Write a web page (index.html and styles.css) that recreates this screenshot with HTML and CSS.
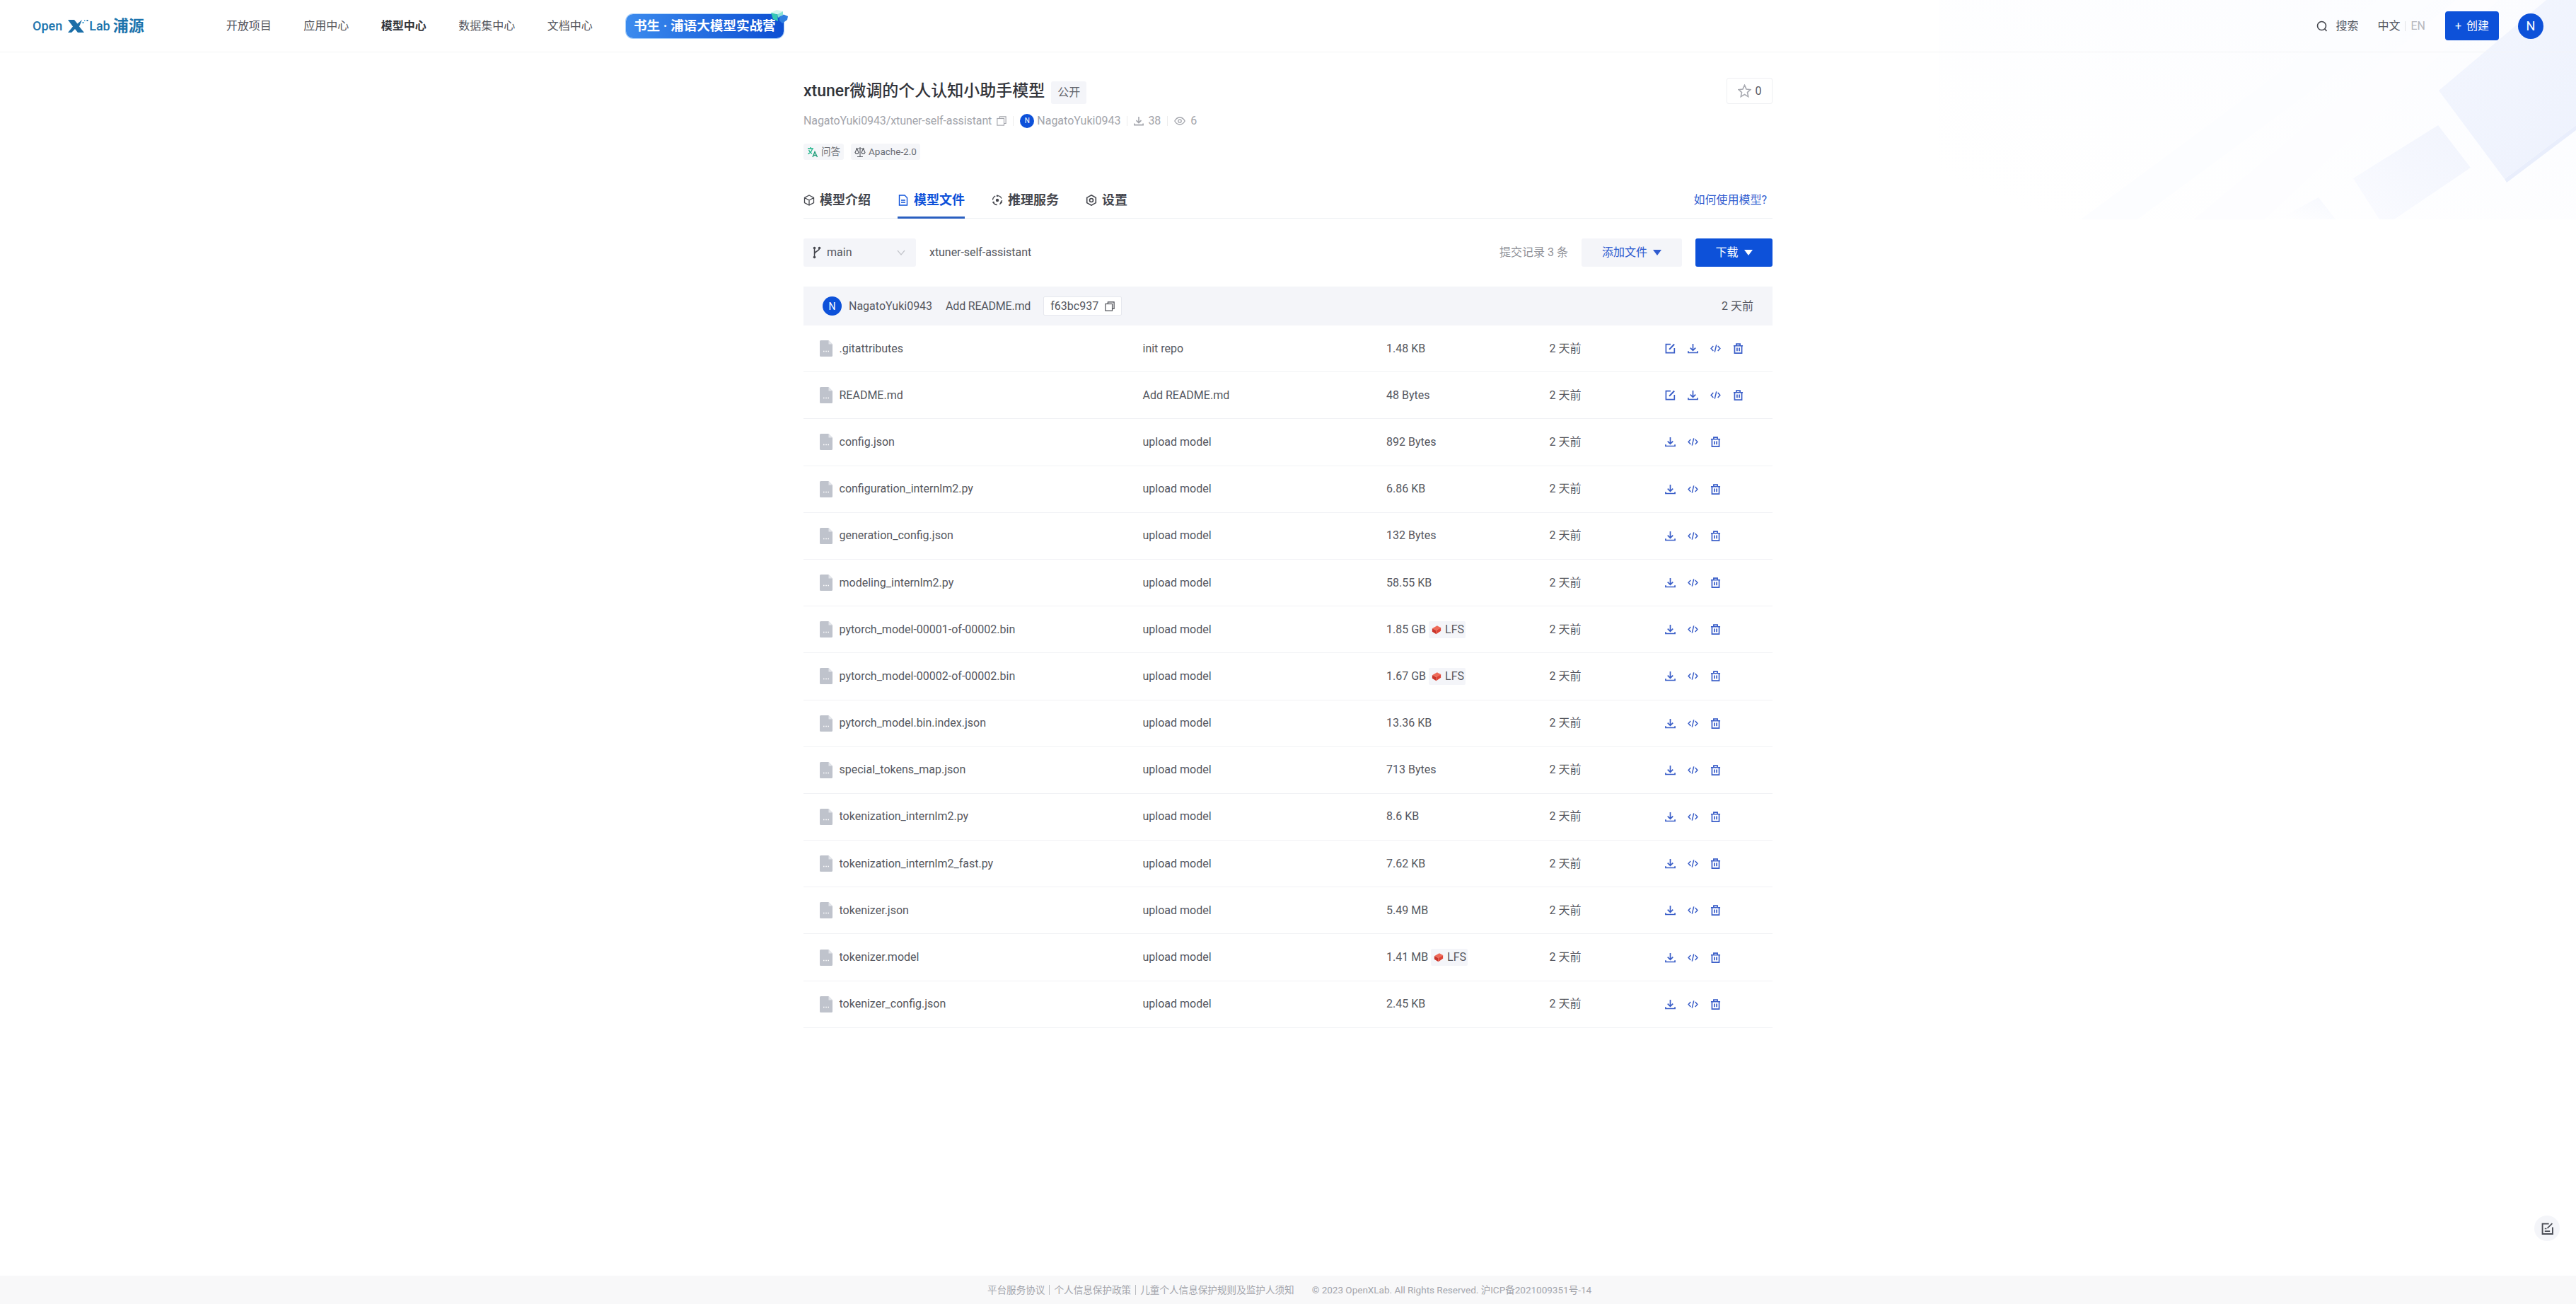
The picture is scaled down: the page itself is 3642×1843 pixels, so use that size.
FILE: index.html
```html
<!DOCTYPE html>
<html lang="zh">
<head>
<meta charset="utf-8">
<title>xtuner微调的个人认知小助手模型</title>
<link rel="stylesheet" href="styles.css">
</head>
<body>
<svg class="sprite" width="0" height="0" aria-hidden="true">
  <symbol id="i-edit" viewBox="0 0 16 16"><path d="M8.5 1.8H1.5v12.7h12.7V7.500" fill="none" stroke="currentColor" stroke-width="1.800"/><path d="M6.500 9.500 14 1.600" fill="none" stroke="currentColor" stroke-width="2.200"/></symbol>
  <symbol id="i-down" viewBox="0 0 16 16"><path d="M8 1v9.500M4 7l4 4 4-4" fill="none" stroke="currentColor" stroke-width="1.800"/><path d="M1 12v2.400h14V12" fill="none" stroke="currentColor" stroke-width="1.800"/></symbol>
  <symbol id="i-code" viewBox="0 0 16 16"><path d="M4.600 4.200 1.200 8l3.400 3.800M11.400 4.200 14.800 8l-3.400 3.800M9.300 2.500 6.700 13.500" fill="none" stroke="currentColor" stroke-width="1.600"/></symbol>
  <symbol id="i-trash" viewBox="0 0 16 16"><path d="M1 4h14M5.200 3.600V1.200h5.600v2.400M2.600 4v11h10.800V4M6.300 7v5M9.700 7v5" fill="none" stroke="currentColor" stroke-width="1.800"/></symbol>
  <symbol id="i-copy" viewBox="0 0 16 16"><path d="M5 4V1h10v11h-3" fill="none" stroke="currentColor" stroke-width="1.300"/><rect x="1" y="4" width="11" height="11" fill="none" stroke="currentColor" stroke-width="1.300"/></symbol>
  <symbol id="i-file" viewBox="0 0 18 23"><path d="M1.500 0H12.500L18 5.500V21.500A1.500 1.500 0 0 1 16.500 23H1.500A1.500 1.500 0 0 1 0 21.500V1.500A1.500 1.500 0 0 1 1.500 0Z" fill="#bfc3cc"/><path d="M12.500 0 18 5.500H12.500Z" fill="#e3e5ea"/><path d="M5 15.500h1.500M8.300 15.500h1.500M11.500 15.500h1.500" stroke="#fff" stroke-width="1.500"/></symbol>
  <symbol id="i-lfs" viewBox="0 0 16 16"><path d="M1 6 9 1.500 15 4.500 7.500 9Z" fill="#ee6a58"/><path d="M1 6 7.500 9V15L1 11Z" fill="#c9342a"/><path d="M7.500 9 15 4.500V10L7.500 15Z" fill="#df4436"/></symbol>
</svg>

<svg class="deco" viewBox="0 0 900 310" aria-hidden="true">
  <defs>
    <linearGradient id="d1" x1="0" y1="0" x2="1" y2="1"><stop offset="0" stop-color="#f3f6fe"/><stop offset="1" stop-color="#eef2fd"/></linearGradient>
    <linearGradient id="d2" x1="1" y1="0" x2="0" y2="1"><stop offset="0" stop-color="#f1f4fd"/><stop offset="1" stop-color="#fafbff"/></linearGradient>
    <linearGradient id="d3" x1="1" y1="0" x2="0" y2="1"><stop offset="0" stop-color="#f6f8fe"/><stop offset="1" stop-color="#ffffff"/></linearGradient>
    <linearGradient id="d0" x1="1" y1="0" x2="0" y2="0.800"><stop offset="0" stop-color="#fbfcff"/><stop offset="1" stop-color="#ffffff"/></linearGradient>
  </defs>
  <rect width="900" height="310" fill="url(#d0)"/>
  <path d="M200 310 620 0H700L280 310Z" fill="#fcfdff"/>
  <path d="M360 310 730 0H790L460 310Z" fill="#fdfdff"/>
  <path d="M799 253 900 177V184L802 258Z" fill="#e9eefc"/>
  <path d="M706 128 858 0H900V177L799 253Z" fill="url(#d1)"/>
  <path d="M705 177 751 237 643 310H622L585 252Z" fill="url(#d2)"/>
  <path d="M536 279 560 310H479Z" fill="url(#d3)"/>
</svg>

<header class="topbar">
  <a class="logo">
    <span class="logo-en">Open</span>
    <svg class="logo-x" viewBox="0 0 29 18" aria-hidden="true"><path d="M0 0H9L13.500 5.500 20 0 16 9.500 23 18H14L10 13 5 18H0L7 9.500Z" fill="#1c6fa8"/><rect x="20.500" y="3" width="2" height="2" fill="#3a9ad0"/><rect x="26.500" y="0" width="2" height="2" fill="#1c6fa8"/><rect x="23" y=".5" width="1.500" height="1.500" fill="#3a9ad0"/></svg>
    <span class="logo-en">Lab</span>
    <span class="logo-cn">浦源</span>
  </a>
  <nav class="nav">
    <a>开放项目</a><a>应用中心</a><a class="on">模型中心</a><a>数据集中心</a><a>文档中心</a>
  </nav>
  <a class="banner">
    <span>书生 · 浦语大模型实战营</span>
    <svg class="banner-cube" viewBox="0 0 25 20" aria-hidden="true"><path d="M1 5 9 1 18 3 10 7.500Z" fill="#d5f6ef"/><path d="M1 5 10 7.500 11 17 4 14Z" fill="#34c8b4"/><path d="M10 7.500 18 3V8L11 12Z" fill="#86e3d4"/><path d="M13 11 19 7.500 25 10 24 15 17 20 13 16Z" fill="#2f7fe0"/></svg>
  </a>
  <div class="top-right">
    <a class="search"><svg class="search-i" viewBox="0 0 16 16" aria-hidden="true"><circle cx="7.500" cy="7.500" r="6" fill="none" stroke="currentColor" stroke-width="1.600"/><path d="m11.500 11.500 3 3.500" stroke="currentColor" stroke-width="1.600"/></svg><span>搜索</span></a>
    <div class="lang"><span>中文</span><i></i><span class="off">EN</span></div>
    <a class="create"><span class="plus">+</span>创建</a>
    <span class="avatar">N</span>
  </div>
</header>

<main class="page">
  <div class="title-row">
    <h1>xtuner微调的个人认知小助手模型</h1>
    <span class="pub">公开</span>
    <a class="star"><svg class="star-i" viewBox="0 0 20 20" aria-hidden="true"><path d="M10 1.500 12.600 7.300 18.800 8 14.200 12.200 15.500 18.500 10 15.300 4.500 18.500 5.800 12.200 1.200 8 7.400 7.300Z" fill="none" stroke="#a9abb2" stroke-width="1.700"/></svg><span>0</span></a>
  </div>
  <div class="meta">
    <span class="meta-path">NagatoYuki0943/xtuner-self-assistant</span>
    <svg class="ic14 m-copy"><use href="#i-copy"/></svg>
    <i class="sep"></i>
    <span class="av-xs">N</span>
    <span>NagatoYuki0943</span>
    <i class="sep"></i>
    <svg class="ic14"><use href="#i-down"/></svg>
    <span>38</span>
    <i class="sep"></i>
    <svg class="eye" viewBox="0 0 16 12" aria-hidden="true"><path d="M.8 6C3 2 5.500 1 8 1s5 1 7.200 5C13 10 10.500 11 8 11S3 10 .8 6Z" fill="none" stroke="currentColor" stroke-width="1.300"/><circle cx="8" cy="6" r="2.200" fill="none" stroke="currentColor" stroke-width="1.300"/></svg>
    <span>6</span>
  </div>
  <div class="tags">
    <span class="tag"><svg class="tag-i" viewBox="0 0 16 16" aria-hidden="true"><path d="M1 3h8M5 1v2M7.500 3C7 6.500 4.500 9 1.500 10.500M2.500 5c1 2.500 2.500 4 4.500 5" fill="none" stroke="#20b58a" stroke-width="1.400"/><path d="M8 15 11 7.500 14.500 15M9.200 12.500h4" fill="none" stroke="#1f9c78" stroke-width="1.400"/></svg>问答</span>
    <span class="tag"><svg class="tag-i" viewBox="0 0 16 16" aria-hidden="true"><path d="M8 1v13M4 14.500h8M2 3h12M3.500 3 1 8.500a2.600 2.600 0 0 0 5 0L3.500 3ZM12.500 3 10 8.500a2.600 2.600 0 0 0 5 0L12.500 3Z" fill="none" stroke="#5f6269" stroke-width="1.200"/></svg>Apache-2.0</span>
  </div>

  <div class="tabs">
    <a class="tab"><svg class="tab-i" viewBox="0 0 16 16" aria-hidden="true"><path d="M8 1 14.500 4.500V11.500L8 15 1.500 11.500V4.500ZM1.500 4.500 8 8l6.500-3.500M8 8v7" fill="none" stroke="currentColor" stroke-width="1.300"/></svg>模型介绍</a>
    <a class="tab on"><svg class="tab-i" viewBox="0 0 16 16" aria-hidden="true"><path d="M2.500 1H10l3.500 3.500V15h-11ZM5 8h6M5 11h6" fill="none" stroke="currentColor" stroke-width="1.400"/></svg>模型文件</a>
    <a class="tab"><svg class="tab-i" viewBox="0 0 16 16" aria-hidden="true"><circle cx="8" cy="8" r="6.500" fill="none" stroke="currentColor" stroke-width="1.300" stroke-dasharray="6.500 3.700"/><circle cx="8" cy="8" r="2.200" fill="currentColor"/><circle cx="8" cy="1.800" r="1.300" fill="currentColor"/><circle cx="2.600" cy="11" r="1.300" fill="currentColor"/><circle cx="13.400" cy="11" r="1.300" fill="currentColor"/></svg>推理服务</a>
    <a class="tab"><svg class="tab-i" viewBox="0 0 16 16" aria-hidden="true"><path d="M8 .8 14.300 4.400V11.600L8 15.200 1.700 11.600V4.400Z" fill="none" stroke="currentColor" stroke-width="1.600"/><circle cx="8" cy="8" r="2.500" fill="none" stroke="currentColor" stroke-width="1.600"/></svg>设置</a>
    <a class="how">如何使用模型?</a>
  </div>

  <div class="toolbar">
    <div class="branch">
      <svg class="branch-i" viewBox="0 0 12 18" aria-hidden="true"><circle cx="2.500" cy="2.500" r="1.800" fill="currentColor"/><circle cx="9.500" cy="2.500" r="1.800" fill="currentColor"/><circle cx="2.500" cy="15.500" r="1.800" fill="currentColor"/><path d="M2.500 3v12M9.500 3c0 4-7 4-7 8" fill="none" stroke="currentColor" stroke-width="1.500"/></svg>
      <span>main</span>
      <svg class="chev" viewBox="0 0 12 8" aria-hidden="true"><path d="M1 1 6 7 11 1" fill="none" stroke="#c3c5cb" stroke-width="1.200"/></svg>
    </div>
    <span class="path">xtuner-self-assistant</span>
    <span class="commits">提交记录 3 条</span>
    <a class="btn btn-soft">添加文件<i class="caret"></i></a>
    <a class="btn btn-solid">下载<i class="caret"></i></a>
  </div>

  <div class="commit">
    <span class="av-sm">N</span>
    <span class="c-name">NagatoYuki0943</span>
    <span class="c-msg">Add README.md</span>
    <span class="hash">f63bc937<svg class="ic14"><use href="#i-copy"/></svg></span>
    <span class="c-time">2 天前</span>
  </div>

  <div class="files">
    <div class="row"><div class="fname"><svg class="fi"><use href="#i-file"/></svg>.gitattributes</div><div>init repo</div><div>1.48 KB</div><div>2 天前</div><div class="acts"><svg class="ai"><use href="#i-edit"/></svg><svg class="ai"><use href="#i-down"/></svg><svg class="ai"><use href="#i-code"/></svg><svg class="ai"><use href="#i-trash"/></svg></div></div>
    <div class="row"><div class="fname"><svg class="fi"><use href="#i-file"/></svg>README.md</div><div>Add README.md</div><div>48 Bytes</div><div>2 天前</div><div class="acts"><svg class="ai"><use href="#i-edit"/></svg><svg class="ai"><use href="#i-down"/></svg><svg class="ai"><use href="#i-code"/></svg><svg class="ai"><use href="#i-trash"/></svg></div></div>
    <div class="row"><div class="fname"><svg class="fi"><use href="#i-file"/></svg>config.json</div><div>upload model</div><div>892 Bytes</div><div>2 天前</div><div class="acts"><svg class="ai"><use href="#i-down"/></svg><svg class="ai"><use href="#i-code"/></svg><svg class="ai"><use href="#i-trash"/></svg></div></div>
    <div class="row"><div class="fname"><svg class="fi"><use href="#i-file"/></svg>configuration_internlm2.py</div><div>upload model</div><div>6.86 KB</div><div>2 天前</div><div class="acts"><svg class="ai"><use href="#i-down"/></svg><svg class="ai"><use href="#i-code"/></svg><svg class="ai"><use href="#i-trash"/></svg></div></div>
    <div class="row"><div class="fname"><svg class="fi"><use href="#i-file"/></svg>generation_config.json</div><div>upload model</div><div>132 Bytes</div><div>2 天前</div><div class="acts"><svg class="ai"><use href="#i-down"/></svg><svg class="ai"><use href="#i-code"/></svg><svg class="ai"><use href="#i-trash"/></svg></div></div>
    <div class="row"><div class="fname"><svg class="fi"><use href="#i-file"/></svg>modeling_internlm2.py</div><div>upload model</div><div>58.55 KB</div><div>2 天前</div><div class="acts"><svg class="ai"><use href="#i-down"/></svg><svg class="ai"><use href="#i-code"/></svg><svg class="ai"><use href="#i-trash"/></svg></div></div>
    <div class="row"><div class="fname"><svg class="fi"><use href="#i-file"/></svg>pytorch_model-00001-of-00002.bin</div><div>upload model</div><div class="size">1.85 GB<span class="lfs"><svg class="lfs-i"><use href="#i-lfs"/></svg>LFS</span></div><div>2 天前</div><div class="acts"><svg class="ai"><use href="#i-down"/></svg><svg class="ai"><use href="#i-code"/></svg><svg class="ai"><use href="#i-trash"/></svg></div></div>
    <div class="row"><div class="fname"><svg class="fi"><use href="#i-file"/></svg>pytorch_model-00002-of-00002.bin</div><div>upload model</div><div class="size">1.67 GB<span class="lfs"><svg class="lfs-i"><use href="#i-lfs"/></svg>LFS</span></div><div>2 天前</div><div class="acts"><svg class="ai"><use href="#i-down"/></svg><svg class="ai"><use href="#i-code"/></svg><svg class="ai"><use href="#i-trash"/></svg></div></div>
    <div class="row"><div class="fname"><svg class="fi"><use href="#i-file"/></svg>pytorch_model.bin.index.json</div><div>upload model</div><div>13.36 KB</div><div>2 天前</div><div class="acts"><svg class="ai"><use href="#i-down"/></svg><svg class="ai"><use href="#i-code"/></svg><svg class="ai"><use href="#i-trash"/></svg></div></div>
    <div class="row"><div class="fname"><svg class="fi"><use href="#i-file"/></svg>special_tokens_map.json</div><div>upload model</div><div>713 Bytes</div><div>2 天前</div><div class="acts"><svg class="ai"><use href="#i-down"/></svg><svg class="ai"><use href="#i-code"/></svg><svg class="ai"><use href="#i-trash"/></svg></div></div>
    <div class="row"><div class="fname"><svg class="fi"><use href="#i-file"/></svg>tokenization_internlm2.py</div><div>upload model</div><div>8.6 KB</div><div>2 天前</div><div class="acts"><svg class="ai"><use href="#i-down"/></svg><svg class="ai"><use href="#i-code"/></svg><svg class="ai"><use href="#i-trash"/></svg></div></div>
    <div class="row"><div class="fname"><svg class="fi"><use href="#i-file"/></svg>tokenization_internlm2_fast.py</div><div>upload model</div><div>7.62 KB</div><div>2 天前</div><div class="acts"><svg class="ai"><use href="#i-down"/></svg><svg class="ai"><use href="#i-code"/></svg><svg class="ai"><use href="#i-trash"/></svg></div></div>
    <div class="row"><div class="fname"><svg class="fi"><use href="#i-file"/></svg>tokenizer.json</div><div>upload model</div><div>5.49 MB</div><div>2 天前</div><div class="acts"><svg class="ai"><use href="#i-down"/></svg><svg class="ai"><use href="#i-code"/></svg><svg class="ai"><use href="#i-trash"/></svg></div></div>
    <div class="row"><div class="fname"><svg class="fi"><use href="#i-file"/></svg>tokenizer.model</div><div>upload model</div><div class="size">1.41 MB<span class="lfs"><svg class="lfs-i"><use href="#i-lfs"/></svg>LFS</span></div><div>2 天前</div><div class="acts"><svg class="ai"><use href="#i-down"/></svg><svg class="ai"><use href="#i-code"/></svg><svg class="ai"><use href="#i-trash"/></svg></div></div>
    <div class="row"><div class="fname"><svg class="fi"><use href="#i-file"/></svg>tokenizer_config.json</div><div>upload model</div><div>2.45 KB</div><div>2 天前</div><div class="acts"><svg class="ai"><use href="#i-down"/></svg><svg class="ai"><use href="#i-code"/></svg><svg class="ai"><use href="#i-trash"/></svg></div></div>
  </div>
</main>

<a class="float"><svg class="float-i" viewBox="0 0 16 16" aria-hidden="true"><path d="M10 1.500H1.500V15H15V6" fill="none" stroke="#4a4d55" stroke-width="1.800"/><path d="M4.500 11.500h7M4.500 8H7M8 7.500 14.500 1" fill="none" stroke="#4a4d55" stroke-width="1.600"/></svg></a>

<footer class="footer">
  <a>平台服务协议</a><i></i><a>个人信息保护政策</a><i></i><a>儿童个人信息保护规则及监护人须知</a>
  <span class="copy">© 2023 OpenXLab. All Rights Reserved. 沪ICP备2021009351号-14</span>
</footer>
</body>
</html>
```

FILE: styles.css
```css
* { box-sizing: border-box; }
html, body { margin: 0; padding: 0; }
body {
  min-height: 100vh;
  display: flex;
  flex-direction: column;
  position: relative;
  background: #fff;
  color: #555760;
  font: 16px/24px Roboto, "Noto Sans CJK SC", sans-serif;
  overflow: hidden;
}
a { color: inherit; text-decoration: none; }
h1 { margin: 0; font-weight: 500; }
i { font-style: normal; }
.sprite { position: absolute; }
.deco { position: absolute; top: 0; right: 0; width: 900px; height: 310px; z-index: 0; }

.topbar, .page, .footer { position: relative; z-index: 1; }
.topbar {
  height: 74px;
  flex: none;
  display: flex;
  align-items: center;
  padding: 0 46px;
  border-bottom: 1px solid #f3f4f6;
}
.logo { display: flex; align-items: center; color: #1c74ad; }
.logo-en { font-size: 18px; font-weight: 500; }
.logo-x { width: 29px; height: 18px; margin: 0 1px 0 8px; }
.logo-cn { font-size: 22px; font-weight: 700; margin-left: 4px; }
.nav { display: flex; gap: 45.5px; margin-left: 116px; color: #555760; }
.nav .on { color: #33353b; font-weight: 700; }
.banner {
  position: relative;
  margin-left: 47px;
  width: 223px;
  height: 34px;
  border-radius: 10px;
  display: flex;
  align-items: center;
  justify-content: center;
  color: #fff;
  font-size: 18.6px;
  font-weight: 700;
  background: linear-gradient(90deg, #3b8bee, #0d4fd2);
  box-shadow: 0 0 0 1px #a9d0fa;
}
.banner-cube { position: absolute; top: -7px; right: -6px; width: 25px; height: 20px; }
.top-right { margin-left: auto; display: flex; align-items: center; }
.search { display: flex; align-items: center; gap: 11px; }
.search-i { width: 16px; height: 16px; color: #44464d; }
.lang { display: flex; align-items: center; margin-left: 27px; }
.lang i { width: 1px; height: 14px; background: #e1e2e6; margin: 0 7px; }
.lang .off { color: #b5b7bd; }
.create {
  margin-left: 28px;
  width: 76px;
  height: 41px;
  border-radius: 4px;
  display: flex;
  align-items: center;
  justify-content: center;
  gap: 7px;
  background: #0d51d9;
  color: #fff;
}
.plus { font-size: 16px; }
.avatar {
  margin-left: 27px;
  width: 36px;
  height: 36px;
  border-radius: 50%;
  display: flex;
  align-items: center;
  justify-content: center;
  background: #0d51d9;
  color: #fff;
  font-size: 18px;
}

.page { width: 1370px; margin: 0 auto; padding-top: 36px; }
.title-row { display: flex; align-items: center; height: 37px; }
h1 { font-size: 23px; line-height: 37px; color: #33353b; }
.pub {
  margin: 4px 0 0 9px;
  width: 50px;
  height: 32px;
  border-radius: 3px;
  display: flex;
  align-items: center;
  justify-content: center;
  background: #f4f5f9;
  color: #62646b;
}
.star {
  margin-left: auto;
  width: 65px;
  height: 37px;
  display: flex;
  align-items: center;
  justify-content: center;
  gap: 6px;
  border: 1px solid #eeeff2;
  border-radius: 3px;
  background: #fff;
}
.star-i { width: 19px; height: 19px; }

.meta {
  display: flex;
  align-items: center;
  height: 24px;
  margin-top: 12px;
  color: #a3a5ac;
}
.meta-path { letter-spacing: -0.1px; }
.ic14 { width: 14px; height: 14px; color: currentColor; flex: none; }
.m-copy { margin-left: 7px; }
.sep { width: 1px; height: 14px; background: #eceded; margin: 0 9px; }
.av-xs {
  width: 20px;
  height: 20px;
  border-radius: 50%;
  display: flex;
  align-items: center;
  justify-content: center;
  background: #0d51d9;
  color: #fff;
  font-size: 10px;
  margin-right: 4px;
}
.meta .ic14 + span { margin-left: 6px; }
.eye { width: 16px; height: 12px; margin-right: 7px; }

.tags { display: flex; gap: 10px; margin-top: 20px; }
.tag {
  height: 23px;
  padding: 0 5px;
  display: flex;
  align-items: center;
  gap: 4px;
  background: #f5f6f9;
  border-radius: 3px;
  font-size: 13.5px;
  line-height: 23px;
  color: #6b6d74;
}
.tag-i { width: 16px; height: 16px; }

.tabs {
  display: flex;
  gap: 38px;
  margin-top: 30px;
  height: 53px;
  border-bottom: 1px solid #eef0f3;
}
.tab {
  display: flex;
  align-items: center;
  gap: 7px;
  height: 53px;
  padding-top: 3px;
  font-size: 18px;
  font-weight: 700;
  color: #44464d;
  border-bottom: 3px solid transparent;
}
.tab.on { color: #0d51d9; border-bottom-color: #2a5fc0; }
.tab-i { width: 16px; height: 16px; flex: none; }
.how { margin-left: auto; margin-right: 8px; align-self: center; color: #2f5bcf; padding-top: 1px; }

.toolbar { display: flex; align-items: center; height: 40px; margin-top: 28px; }
.branch {
  width: 159px;
  height: 40px;
  display: flex;
  align-items: center;
  padding: 0 13px;
  border-radius: 3px;
  background: #f4f5f9;
}
.branch-i { width: 12px; height: 18px; color: #44464d; margin-right: 8px; }
.chev { width: 12px; height: 8px; margin-left: auto; margin-right: 2px; }
.path { margin-left: 19px; letter-spacing: -0.05px; }
.commits { margin-left: auto; color: #909299; }
.btn {
  height: 40px;
  border-radius: 3px;
  display: flex;
  align-items: center;
  justify-content: center;
  gap: 8px;
}
.btn-soft { width: 142px; margin-left: 19px; background: #f4f5f9; color: #2f5bcf; }
.btn-solid { width: 109px; margin-left: 19px; background: #0d51d9; color: #fff; }
.caret {
  width: 0;
  height: 0;
  border-left: 6px solid transparent;
  border-right: 6px solid transparent;
  border-top: 8px solid currentColor;
}

.commit {
  display: flex;
  align-items: center;
  height: 55px;
  margin-top: 28px;
  padding: 0 27px;
  background: #f4f5f9;
}
.av-sm {
  width: 27px;
  height: 27px;
  border-radius: 50%;
  display: flex;
  align-items: center;
  justify-content: center;
  background: #0d51d9;
  color: #fff;
  font-size: 14px;
}
.c-name { margin-left: 10px; }
.c-msg { margin-left: 19px; letter-spacing: -0.2px; }
.hash {
  margin-left: 18px;
  width: 111px;
  height: 27px;
  display: flex;
  align-items: center;
  justify-content: center;
  gap: 9px;
  background: #fff;
  border: 1px solid #e6e8ee;
  border-radius: 2px;
}
.hash .ic14 { color: #44464d; }
.c-time { margin-left: auto; }

.row {
  display: grid;
  grid-template-columns: 456.5px 344.5px 230.6px 163.4px 1fr;
  align-items: center;
  height: 66.2px;
  padding-left: 23px;
  border-bottom: 1px solid #f1f2f5;
}
.fname { display: flex; align-items: center; gap: 9.5px; }
.fi { width: 18px; height: 23px; flex: none; }
.acts { display: flex; gap: 17px; color: #3a5ec8; }
.ai { width: 15px; height: 15px; flex: none; }
.size { display: flex; align-items: center; gap: 4px; }
.lfs {
  height: 24px;
  width: 52px;
  padding: 0 4px;
  display: flex;
  align-items: center;
  gap: 5px;
  background: #f4f5f9;
  border-radius: 2px;
}
.lfs-i { width: 14px; height: 14px; flex: none; }

.float {
  position: absolute;
  right: 23px;
  top: 1718px;
  width: 36px;
  height: 36px;
  border-radius: 50%;
  background: #f4f5f9;
  display: flex;
  align-items: center;
  justify-content: center;
  z-index: 2;
}
.float-i { width: 17px; height: 17px; }

.footer {
  margin-top: auto;
  height: 40px;
  flex: none;
  display: flex;
  align-items: center;
  justify-content: center;
  padding-left: 4px;
  background: #f8f8f9;
  color: #a3a5ac;
  font-size: 13.6px;
}
.footer i { width: 1px; height: 14px; background: #b9bbc0; margin: 0 6px; }
.copy { margin-left: 25px; letter-spacing: -0.05px; }
```
